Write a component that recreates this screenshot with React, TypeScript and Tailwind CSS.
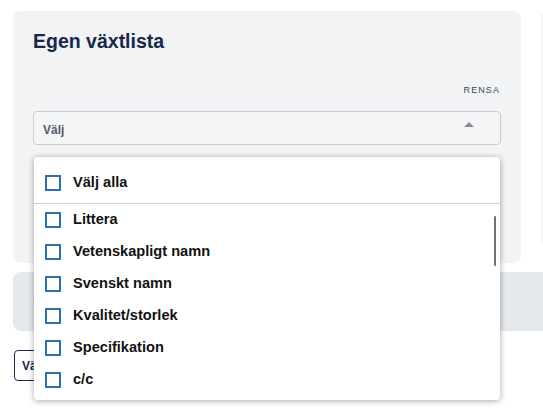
import React from 'react';

const items = ['Littera', 'Vetenskapligt namn', 'Svenskt namn', 'Kvalitet/storlek', 'Specifikation', 'c/c'];

function Box() {
  return <span className="block w-4 h-4 border-2 border-[#2f6eb1] bg-white shrink-0" />;
}

export default function App() {
  return (
    <div className="w-[543px] h-[415px] bg-white overflow-hidden relative font-['Liberation_Sans',Arial,sans-serif]">
      <div className="flex gap-5 pt-[11px] pl-[13px]">
        {/* Plant list card */}
        <div className="w-[508px] h-[252px] shrink-0 bg-[#f2f3f5] rounded-lg px-5 pt-[18px]">
          <h2 className="text-[19.5px] font-bold text-[#16294a] leading-6">Egen växtlista</h2>
          <div className="flex justify-end mt-[31px] pr-px">
            <span className="text-[9px] tracking-[0.12em] text-[#3b475a] leading-3">RENSA</span>
          </div>
          <div className="relative mt-[15px]">
            <div className="h-[34px] border border-[#c9cdd3] rounded bg-[#f4f5f7] flex items-center justify-between pl-[9px] pr-[26px]">
              <span className="text-[12px] font-bold text-[#555b63] mt-[3px]">Välj</span>
              <span className="w-0 h-0 border-x-[5px] border-x-transparent border-b-[5px] border-b-[#8a8d91] -mt-[8px]" />
            </div>

            {/* Dropdown menu */}
            <div className="absolute left-px top-[46px] w-[466px] h-[243px] bg-white rounded shadow-[0_1px_6px_rgba(0,0,0,0.35)] flex flex-col z-10">
              <div className="pt-[10px] pb-1 px-[11px] border-b border-[#cfd1d4]">
                <label className="h-8 flex items-center gap-3">
                  <Box />
                  <span className="text-[14.6px] font-bold text-[#121212]">Välj alla</span>
                </label>
              </div>
              <div className="relative flex-1 overflow-hidden">
                {items.map((it) => (
                  <label key={it} className="h-8 flex items-center gap-3 px-[11px]">
                    <Box />
                    <span className="text-[14.6px] font-bold text-[#121212]">{it}</span>
                  </label>
                ))}
                <span className="absolute right-[4px] top-[12px] w-[2px] h-[50px] bg-[#6f7276] rounded-sm" />
              </div>
            </div>
          </div>
        </div>

        {/* Side card */}
        <div className="w-[200px] h-[237px] shrink-0 bg-white border border-[#eceef1] rounded-lg" />
      </div>

      <div className="ml-[13px] mt-[9px] h-[59px] bg-[#e5e8ec] rounded-l-lg flex items-center px-5">
        <span className="text-[11px] text-[#8a8f96]">Sortera listan</span>
      </div>

      <div className="ml-[14px] mt-[19px] flex">
        <button className="h-[31px] px-[7px] border border-[#16294a] rounded text-[12px] font-bold text-[#16294a]">
          Välj alla växter
        </button>
      </div>
    </div>
  );
}
